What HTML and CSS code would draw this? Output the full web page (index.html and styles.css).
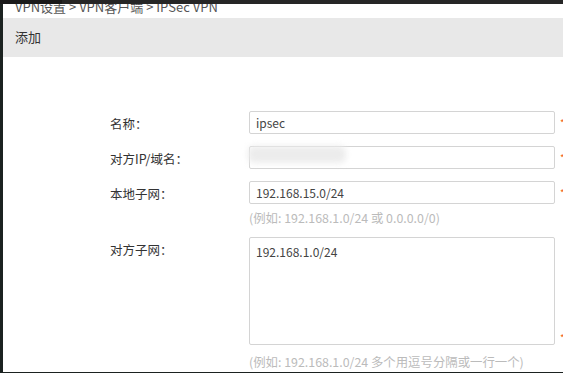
FILE: index.html
```html
<!DOCTYPE html>
<html>
<head>
<meta charset="utf-8">
<link rel="stylesheet" href="styles.css">
</head>
<body>
<div class="topbar"><span class="tb-left"></span></div>
<div class="frame">
  <div class="page">
    <div class="crumb"><span class="crumb-text">VPN设置 &gt; VPN客户端 &gt; IPSec VPN</span></div>
    <div class="head">添加</div>
    <div class="form">
      <div class="label">名称：</div>
      <div class="field"><div class="input">ipsec</div></div>
      <div class="req">*</div>

      <div class="label">对方IP/域名：</div>
      <div class="field"><div class="input"><span class="blur"></span></div></div>
      <div class="req">*</div>

      <div class="label">本地子网：</div>
      <div class="field">
        <div class="input">192.168.15.0/24</div>
        <div class="hint">(例如: 192.168.1.0/24 或 0.0.0.0/0)</div>
      </div>
      <div class="req">*</div>

      <div class="label">对方子网：</div>
      <div class="field">
        <div class="textarea">192.168.1.0/24</div>
        <div class="hint hint-ta">(例如: 192.168.1.0/24 多个用逗号分隔或一行一个)</div>
      </div>
      <div class="req req-ta">*</div>
    </div>
  </div>
</div>
</body>
</html>
```
FILE: styles.css
```css
html, body {
  margin: 0;
  padding: 0;
  height: 373px;
  overflow: hidden;
  background: #1b2220;
  font-family: "Microsoft YaHei", "Noto Sans CJK SC", "Noto Sans", sans-serif;
}
.topbar {
  height: 4px;
  background: #262626;
  display: flex;
}
.tb-left {
  width: 62px;
  background: #1a1a1a;
}
.frame {
  margin-left: 3px;
  height: 368px;
  background: #fff;
  overflow: hidden;
}
.page {
  display: flex;
  flex-direction: column;
}
.crumb {
  height: 14px;
  overflow: hidden;
  padding-left: 12px;
}
.crumb-text {
  display: block;
  margin-top: -6px;
  font-size: 13px;
  line-height: 18px;
  color: #555;
}
.head {
  height: 39px;
  background: #e8e8e8;
  padding-left: 12px;
  font-size: 13px;
  line-height: 38px;
  color: #333;
}
.form {
  display: grid;
  grid-template-columns: 134px 306px 1fr;
  column-gap: 5px;
  row-gap: 12px;
  margin-top: 54px;
  margin-left: 107px;
}
.label {
  font-size: 12.5px;
  color: #333;
  line-height: 25px;
  height: 23px;
}
.field {
  display: flex;
  flex-direction: column;
}
.input {
  box-sizing: border-box;
  height: 23px;
  border: 1px solid #d4d4d4;
  border-radius: 2px;
  padding: 0 6px;
  font-size: 12px;
  line-height: 21px;
  color: #444;
}
.blur {
  display: block;
  margin-left: -8px;
  margin-top: -1px;
  width: 98px;
  height: 17px;
  background: #ececec;
  filter: blur(3px);
  border-radius: 6px;
}
.textarea {
  box-sizing: border-box;
  height: 108px;
  border: 1px solid #d4d4d4;
  border-radius: 2px;
  padding: 5px 6px;
  font-size: 12px;
  line-height: 18px;
  color: #444;
}
.hint {
  font-size: 12.4px;
  color: #bbb;
  line-height: 14px;
  margin-top: 7px;
}
.hint-ta {
  margin-top: 10px;
}
.req {
  color: #f26522;
  font-size: 10px;
  line-height: 23px;
  height: 23px;
}
.req-ta {
  align-self: start;
  margin-top: 89px;
}
```
